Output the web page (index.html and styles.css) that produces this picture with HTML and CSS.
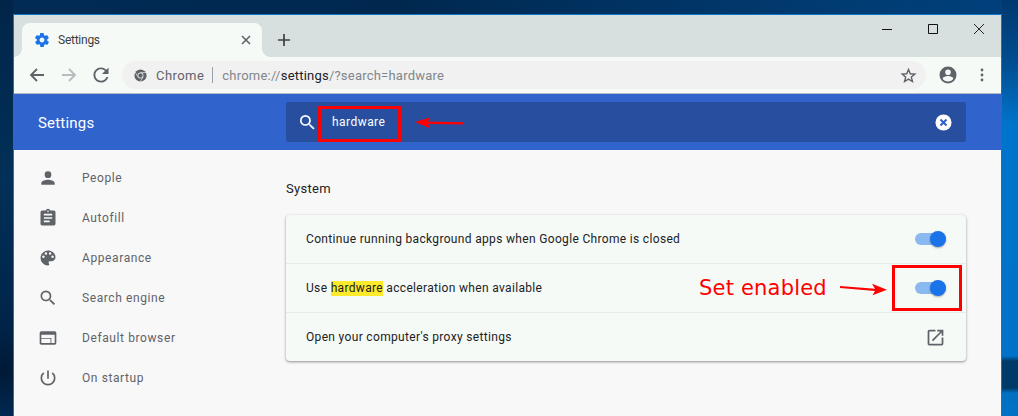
FILE: index.html
```
<!DOCTYPE html>
<html lang="en">
<head>
<meta charset="utf-8">
<title>Settings</title>
<link rel="stylesheet" href="styles.css">
</head>
<body>
<div class="desktop">
  <div class="window">
    <div class="tabstrip">
      <div class="tab">
        <svg class="tab-icon" viewBox="2 2 20 20"><path fill="#1a73e8" d="M19.4 13c.1-.3.1-.7.1-1s0-.7-.1-1l2.1-1.600c.2-.2.2-.4.1-.6l-2-3.500c-.1-.2-.4-.3-.6-.2l-2.500 1c-.5-.4-1.100-.7-1.700-1l-.4-2.600c0-.3-.2-.5-.5-.5h-4c-.3 0-.5.2-.5.4l-.4 2.700c-.6.2-1.100.6-1.700 1l-2.500-1c-.2-.1-.5 0-.6.2l-2 3.500c-.1.2-.1.4.1.6L4.600 11c0 .3-.1.7-.1 1s0 .7.1 1l-2.100 1.600c-.2.2-.2.4-.1.6l2 3.500c.1.2.4.3.6.2l2.500-1c.5.4 1.100.7 1.700 1l.4 2.600c0 .3.2.5.5.5h4c.3 0 .5-.2.5-.4l.4-2.700c.6-.2 1.200-.6 1.700-1l2.500 1c.2.1.5 0 .6-.2l2-3.500c.1-.2.1-.4-.1-.6L19.400 13zM12 15.500c-1.900 0-3.500-1.600-3.500-3.500s1.600-3.500 3.500-3.500 3.500 1.600 3.500 3.500-1.600 3.500-3.500 3.500z"/></svg>
        <span class="tab-title">Settings</span>
        <svg class="tab-close" viewBox="0 0 10 10"><path d="M1 1l8 8M9 1L1 9" stroke="#5f6368" stroke-width="1.600" fill="none"/></svg>
      </div>
      <svg class="new-tab" viewBox="0 0 12 12"><path d="M6 0v12M0 6h12" stroke="#3c4043" stroke-width="1.700" fill="none"/></svg>
      <div class="caption">
        <svg viewBox="0 0 10 10"><path d="M0 5.500h10" stroke="#111" fill="none"/></svg>
        <svg viewBox="0 0 10 10"><path d="M.5.5h9v9h-9z" stroke="#111" fill="none"/></svg>
        <svg viewBox="0 0 10 10"><path d="M0 0l10 10M10 0L0 10" stroke="#111" stroke-width=".9" fill="none"/></svg>
      </div>
    </div>
    <div class="toolbar">
      <svg class="nav" viewBox="0 0 16 16"><path d="M15 8H2M8 2L2 8l6 6" stroke="#5f6368" stroke-width="1.800" fill="none"/></svg>
      <svg class="nav" viewBox="0 0 16 16"><path d="M1 8h13M8 2l6 6-6 6" stroke="#b9bcbf" stroke-width="1.800" fill="none"/></svg>
      <svg class="nav" viewBox="3.500 3.500 17 17"><path fill="#5f6368" d="M17.650 6.350A7.958 7.958 0 0 0 12 4c-4.420 0-7.990 3.580-7.990 8s3.570 8 7.990 8c3.730 0 6.840-2.550 7.730-6h-2.080A5.990 5.990 0 0 1 12 18c-3.310 0-6-2.690-6-6s2.690-6 6-6c1.660 0 3.140.69 4.220 1.780L13 11h7V4l-2.350 2.350z"/></svg>
      <div class="omnibox">
        <svg class="chrome-icon" viewBox="0 0 16 16"><circle cx="8" cy="8" r="7.500" fill="#5f6368"/><circle cx="8" cy="8" r="3.600" fill="#f1f1f1"/><circle cx="8" cy="8" r="2.700" fill="#5f6368"/><path d="M8 4.400h7M4.900 9.800L1.500 3.900M11.100 9.800L7.600 15.600" stroke="#f1f1f1" stroke-width=".8" fill="none"/></svg>
        <span class="origin">Chrome</span>
        <span class="sep"></span>
        <span class="url"><span class="dim">chrome://</span>settings<span class="dim">/?search=hardware</span></span>
        <svg class="star" viewBox="0 0 24 24"><path d="M12 3.500l2.500 6 6.500.5-5 4.200 1.600 6.300L12 17.100l-5.600 3.400L8 14.200 3 10l6.500-.5z" fill="none" stroke="#5f6368" stroke-width="2"/></svg>
      </div>
      <svg class="avatar" viewBox="0 0 18 18"><path fill="#5f6368" d="M9 .5a8.500 8.500 0 1 0 0 17 8.500 8.500 0 0 0 0-17zm0 3a2.800 2.800 0 1 1 0 5.600 2.800 2.800 0 0 1 0-5.600zm0 12c-2.200 0-4.200-1.100-5.300-2.800 0-1.800 3.500-2.700 5.300-2.700s5.300.9 5.300 2.700C13.200 14.400 11.200 15.500 9 15.500z"/></svg>
      <svg class="menu" viewBox="0 0 4 14"><circle cx="2" cy="2" r="1.400" fill="#5f6368"/><circle cx="2" cy="7" r="1.400" fill="#5f6368"/><circle cx="2" cy="12" r="1.400" fill="#5f6368"/></svg>
    </div>
    <header class="app-header">
      <h1 class="app-title">Settings</h1>
      <div class="search">
        <svg class="search-icon" viewBox="3 3 18 18"><path fill="#fff" d="M15.500 14h-.79l-.28-.27A6.471 6.471 0 0 0 16 9.500 6.500 6.500 0 1 0 9.500 16c1.610 0 3.090-.59 4.230-1.570l.27.28v.79l5 4.990L20.490 19l-4.990-5zm-6 0C7.010 14 5 11.990 5 9.500S7.010 5 9.500 5 14 7.010 14 9.500 11.990 14 9.500 14z"/></svg>
        <span class="search-text">hardware</span>
        <svg class="search-clear" viewBox="0 0 18 18"><circle cx="9" cy="9" r="8.500" fill="#fff"/><path d="M5.800 5.800l6.400 6.400M12.200 5.800l-6.400 6.400" stroke="#2f5fc4" stroke-width="2" fill="none"/></svg>
      </div>
    </header>
    <div class="body">
      <nav class="sidebar">
        <div class="nav-item"><svg viewBox="0 0 24 24"><path d="M12 12a4 4 0 1 0 0-8 4 4 0 0 0 0 8zm0 2c-2.700 0-8 1.300-8 4v2h16v-2c0-2.700-5.300-4-8-4z"/></svg><span>People</span></div>
        <div class="nav-item"><svg viewBox="0 0 24 24"><path d="M19 3h-4.200A3 3 0 0 0 12 1a3 3 0 0 0-2.800 2H5a2 2 0 0 0-2 2v14c0 1.100.9 2 2 2h14a2 2 0 0 0 2-2V5a2 2 0 0 0-2-2zm-7 0a1 1 0 1 1 0 2 1 1 0 0 1 0-2zm2 14H7v-2h7v2zm3-4H7v-2h10v2zm0-4H7V7h10v2z"/></svg><span>Autofill</span></div>
        <div class="nav-item"><svg viewBox="0 0 24 24"><path d="M12 3a9 9 0 0 0 0 18c.8 0 1.500-.7 1.500-1.500 0-.4-.1-.7-.4-1-.2-.3-.4-.6-.4-1 0-.8.7-1.500 1.500-1.500H16a5 5 0 0 0 5-5c0-4.400-4-8-9-8zm-5.500 9a1.500 1.500 0 1 1 0-3 1.500 1.500 0 0 1 0 3zm3-4a1.500 1.500 0 1 1 0-3 1.500 1.500 0 0 1 0 3zm5 0a1.500 1.500 0 1 1 0-3 1.500 1.500 0 0 1 0 3zm3 4a1.500 1.500 0 1 1 0-3 1.500 1.500 0 0 1 0 3z"/></svg><span>Appearance</span></div>
        <div class="nav-item"><svg viewBox="0 0 24 24"><path d="M15.500 14h-.79l-.28-.27A6.471 6.471 0 0 0 16 9.500 6.500 6.500 0 1 0 9.500 16c1.610 0 3.090-.59 4.230-1.570l.27.28v.79l5 4.990L20.490 19l-4.990-5zm-6 0C7.010 14 5 11.990 5 9.500S7.010 5 9.500 5 14 7.010 14 9.500 11.990 14 9.500 14z"/></svg><span>Search engine</span></div>
        <div class="nav-item"><svg viewBox="0 0 24 24"><path d="M20 4H4a2 2 0 0 0-2 2v12c0 1.100.9 2 2 2h16a2 2 0 0 0 2-2V6a2 2 0 0 0-2-2zm-5 14H4v-5h11v5zm0-6H4V8h16v10h-4v-6z"/></svg><span>Default browser</span></div>
        <div class="nav-item"><svg viewBox="0 0 24 24"><path d="M13 3h-2v10h2V3zm4.800 2.200l-1.400 1.400A7 7 0 1 1 7.600 6.600L6.200 5.200a9 9 0 1 0 11.600 0z"/></svg><span>On startup</span></div>
      </nav>
      <main class="content">
        <h2 class="section-title">System</h2>
        <section class="card">
          <div class="row"><span>Continue running background apps when Google Chrome is closed</span><span class="toggle"></span></div>
          <div class="row"><span>Use <mark class="hit">hardware</mark> acceleration when available</span><span class="toggle"></span></div>
          <div class="row"><span>Open your computer's proxy settings</span><svg class="launch" viewBox="0 0 24 24"><path fill="#5f6368" d="M19 19H5V5h7V3H5a2 2 0 0 0-2 2v14c0 1.100.9 2 2 2h14a2 2 0 0 0 2-2v-7h-2v7zM14 3v2h3.600l-9.800 9.800 1.400 1.400L19 6.400V10h2V3h-7z"/></svg></div>
        </section>
      </main>
    </div>
  </div>
  <div class="note note-search"></div>
  <div class="note note-toggle"></div>
  <div class="note-label">Set enabled</div>
  <svg class="arrows" viewBox="0 0 1018 416"><path fill="#f00" d="M415 122l15-4.500-2 4 35.500.7v2.200l-35.500-.4 2 4.300zM840 286l35 2.700-3-5 15 6-14.500 5.500 2.500-4.200-35-3z"/></svg>
</div>
</body>
</html>
```
FILE: styles.css
```
* { box-sizing: border-box; }
html, body { margin: 0; height: 100%; overflow: hidden; }
body { font-family: Roboto, "Liberation Sans", sans-serif; }
.desktop {
  position: relative;
  width: 1018px;
  height: 416px;
  padding: 14px 16px 0 13px;
  overflow: hidden;
  background:
    linear-gradient(180deg, #00386f 0, #004c8e 60px, #0074cc 125px, #0072c8 356px, #003a68 361px, #003a68 388px, #0070c0 393px, #0072c6 416px) right top / 16px 100% no-repeat,
    linear-gradient(180deg, #012549 0, #013058 180px, #00254a 320px, #001a38 370px, #002850 416px) left top / 13px 100% no-repeat,
    linear-gradient(90deg, #012a55 0, #00284f 400px, #013a70 800px, #00407c 1018px);
}
.window {
  width: 989px;
  height: 402px;
  border: 1px solid #0d78c9;
  border-bottom: 0;
  display: flex;
  flex-direction: column;
  background: #f8f8f8;
}
.tabstrip {
  height: 42px;
  flex: none;
  background: #d8e0df;
  display: flex;
  align-items: flex-end;
  padding-left: 8px;
  position: relative;
}
.tab {
  position: relative;
  width: 240px;
  height: 34px;
  background: #f6faf7;
  border-radius: 8px 8px 0 0;
  display: flex;
  align-items: center;
  padding: 0 12px 0 13px;
}
.tab::before, .tab::after {
  content: "";
  position: absolute;
  bottom: 0;
  width: 8px;
  height: 8px;
}
.tab::before { left: -8px; background: radial-gradient(circle at 0 0, #d8e0df 7.500px, #f6faf7 8px); }
.tab::after { right: -8px; background: radial-gradient(circle at 100% 0, #d8e0df 7.500px, #f6faf7 8px); }
.tab-icon { width: 14px; height: 14px; margin-right: 9px; flex: none; }
.tab-title { font-size: 12px; color: #3c4043; flex: 1; letter-spacing: -.25px; }
.tab-close { width: 10px; height: 10px; flex: none; margin-right: -1px; }
.new-tab { width: 12px; height: 12px; margin: 0 0 11px 16px; flex: none; }
.caption {
  position: absolute;
  top: 0;
  right: 0;
  display: flex;
  gap: 36px;
  padding: 9px 17px 0 0;
}
.caption svg { width: 10px; height: 10px; display: block; }
.toolbar {
  height: 36px;
  flex: none;
  background: #f6faf7;
  display: flex;
  align-items: center;
  padding-left: 15px;
}
.nav { width: 16px; height: 16px; margin-right: 16px; flex: none; }
.nav:nth-child(3) { margin-right: 13px; }
.omnibox {
  width: 804px;
  height: 28px;
  border-radius: 14px;
  background: #f1f1f1;
  display: flex;
  align-items: center;
  padding: 0 9px 0 12px;
  font-size: 13px;
  flex: none;
}
.chrome-icon { width: 13px; height: 13px; flex: none; margin-right: 9px; }
.origin { color: #5f6368; letter-spacing: .45px; }
.sep { width: 1px; height: 16px; background: #9aa0a6; margin: 0 9px 0 8px; }
.url { flex: 1; color: #202124; letter-spacing: .22px; }
.dim { color: #80868b; }
.star { width: 17px; height: 17px; flex: none; }
.avatar { width: 18px; height: 18px; margin-left: 13px; flex: none; }
.menu { width: 4px; height: 14px; margin-left: 23px; flex: none; }
.app-header {
  height: 57px;
  flex: none;
  background: #3163cd;
  border-top: 1px solid #b4bcc6;
  display: flex;
  align-items: center;
  padding-left: 24px;
}
.app-title {
  margin: 0;
  width: 248px;
  font-size: 15px;
  font-weight: 400;
  color: #fff;
  letter-spacing: .2px;
  position: relative;
  top: 1px;
}
.search {
  width: 680px;
  height: 40px;
  background: #284f9f;
  border-radius: 2px;
  display: flex;
  align-items: center;
  padding: 0 14px;
}
.search-icon { width: 15px; height: 15px; flex: none; }
.search-text { flex: 1; margin-left: 17px; color: #fff; font-size: 12px; letter-spacing: .45px; }
.search-clear { width: 17px; height: 17px; flex: none; }
.body { flex: 1; display: flex; min-height: 0; }
.sidebar { width: 272px; flex: none; padding-top: 8px; }
.nav-item {
  height: 40px;
  display: flex;
  align-items: center;
  padding-left: 24px;
  font-size: 12px;
  color: #5f6368;
  letter-spacing: .6px;
  font-weight: 400;
}
.nav-item svg { width: 20px; height: 20px; flex: none; fill: #5f6368; margin-right: 24px; }
.content { flex: 1; padding-top: 30px; }
.section-title {
  margin: 0 0 18px;
  font-size: 13px;
  line-height: 17px;
  font-weight: 400;
  color: #202124;
  letter-spacing: .3px;
}
.card {
  width: 680px;
  height: 146px;
  background: #f6faf7;
  border-radius: 4px;
  box-shadow: 0 1px 2px rgba(60,64,67,.4), 0 1px 3px 1px rgba(60,64,67,.13);
  display: flex;
  flex-direction: column;
}
.row {
  flex: 1;
  display: flex;
  align-items: center;
  justify-content: space-between;
  padding: 0 20px;
  font-size: 12px;
  color: #202124;
  letter-spacing: .33px;
  border-top: 1px solid #e9ebea;
}
.row:first-child { border-top: 0; }
.hit { display: inline-block; line-height: 15px; background: #fcea2b; color: #202124; }
.toggle {
  width: 31px;
  height: 12px;
  border-radius: 6px;
  background: #8ab8f0;
  position: relative;
  flex: none;
}
.toggle::after {
  content: "";
  position: absolute;
  right: 0;
  top: -2px;
  width: 16px;
  height: 16px;
  border-radius: 50%;
  background: #1a73e8;
  box-shadow: 0 1px 2px rgba(0,0,0,.3);
}
.launch { width: 21px; height: 21px; flex: none; }
.note { position: absolute; border: 3px solid #f00; }
.note-search { left: 318px; top: 106px; width: 83px; height: 36px; }
.note-toggle { left: 892px; top: 265px; width: 70px; height: 46px; }
.note-label {
  position: absolute;
  left: 699px;
  top: 275px;
  font: 21px/26px "DejaVu Sans", sans-serif;
  color: #f00;
  letter-spacing: .2px;
}
.arrows { position: absolute; inset: 0; width: 1018px; height: 416px; pointer-events: none; }
```
